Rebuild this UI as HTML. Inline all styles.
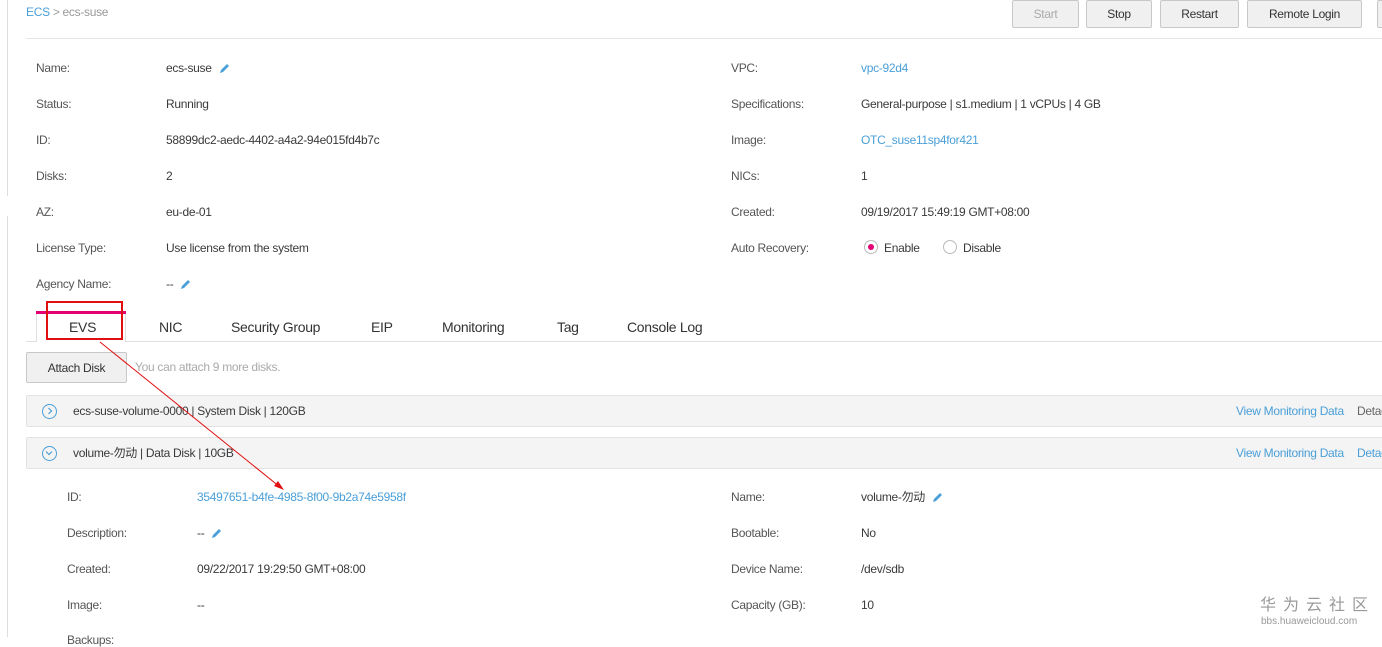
<!DOCTYPE html>
<html><head><meta charset="utf-8"><style>
*{margin:0;padding:0;box-sizing:border-box}
body{width:1382px;height:637px;overflow:hidden;background:#fff;font-family:"Liberation Sans","Noto Sans CJK SC",sans-serif;font-size:12px;color:#3a3a3a;position:relative;letter-spacing:-0.3px;line-height:14px}
.a{position:absolute;white-space:nowrap}
.l{color:#555}
.lk{color:#4a9fd8}
.btn{position:absolute;top:0;height:28px;border:1px solid #c8c8c8;border-radius:2px;background:#f0f0f0;text-align:center;line-height:26px;color:#333}
.pen{display:inline-block;width:12px;height:12px;vertical-align:middle;margin-left:6px}
.panel{position:absolute;left:26px;width:1370px;height:32px;background:#f4f4f4;border:1px solid #e2e2e2;border-radius:2px}
.ci{position:absolute;left:15px;top:8px;width:15px;height:15px;border:1.3px solid #4a9fd8;border-radius:50%}
.tab{position:absolute;top:319px;font-size:14px;color:#333;line-height:16px}
</style></head><body>
<div class="a" style="left:7px;top:0;width:1px;height:196px;background:#ddd"></div>
<div class="a" style="left:7px;top:216px;width:1px;height:421px;background:#ddd"></div>
<div class="a" style="left:26px;top:5px;color:#999"><span class="lk">ECS</span> &gt; ecs-suse</div>
<div class="a" style="left:26px;top:38px;width:1356px;height:1px;background:#e6e6e6"></div>
<div class="btn" style="left:1012px;width:67px;color:#aaa">Start</div>
<div class="btn" style="left:1086px;width:66px">Stop</div>
<div class="btn" style="left:1160px;width:79px">Restart</div>
<div class="btn" style="left:1247px;width:115px">Remote Login</div>
<div class="btn" style="left:1377px;width:20px"></div>

<div class="a l" style="left:36px;top:61px">Name:</div><div class="a" style="left:166px;top:61px">ecs-suse<svg class="pen" viewBox="0 0 12 12"><path d="M2 10 L3 7 L9 1 L11 3 L5 9 Z" fill="#4a9fd8"/></svg></div>
<div class="a l" style="left:36px;top:97px">Status:</div><div class="a" style="left:166px;top:97px">Running</div>
<div class="a l" style="left:36px;top:133px">ID:</div><div class="a" style="left:166px;top:133px">58899dc2-aedc-4402-a4a2-94e015fd4b7c</div>
<div class="a l" style="left:36px;top:169px">Disks:</div><div class="a" style="left:166px;top:169px">2</div>
<div class="a l" style="left:36px;top:205px">AZ:</div><div class="a" style="left:166px;top:205px">eu-de-01</div>
<div class="a l" style="left:36px;top:241px">License Type:</div><div class="a" style="left:166px;top:241px">Use license from the system</div>
<div class="a l" style="left:36px;top:277px">Agency Name:</div><div class="a" style="left:166px;top:277px">--<svg class="pen" viewBox="0 0 12 12"><path d="M2 10 L3 7 L9 1 L11 3 L5 9 Z" fill="#4a9fd8"/></svg></div>

<div class="a l" style="left:731px;top:61px">VPC:</div><div class="a lk" style="left:861px;top:61px">vpc-92d4</div>
<div class="a l" style="left:731px;top:97px">Specifications:</div><div class="a" style="left:861px;top:97px">General-purpose | s1.medium | 1 vCPUs | 4 GB</div>
<div class="a l" style="left:731px;top:133px">Image:</div><div class="a lk" style="left:861px;top:133px">OTC_suse11sp4for421</div>
<div class="a l" style="left:731px;top:169px">NICs:</div><div class="a" style="left:861px;top:169px">1</div>
<div class="a l" style="left:731px;top:205px">Created:</div><div class="a" style="left:861px;top:205px">09/19/2017 15:49:19 GMT+08:00</div>
<div class="a l" style="left:731px;top:241px">Auto Recovery:</div>
<div class="a" style="left:864px;top:240px;width:14px;height:14px;border:1px solid #bbb;border-radius:50%"><div style="margin:3px;width:6px;height:6px;border-radius:50%;background:#e20074"></div></div>
<div class="a" style="left:884px;top:241px">Enable</div>
<div class="a" style="left:943px;top:240px;width:14px;height:14px;border:1px solid #bbb;border-radius:50%"></div>
<div class="a" style="left:963px;top:241px">Disable</div>

<div class="a" style="left:26px;top:341px;width:1356px;height:1px;background:#e0e0e0"></div>
<div class="a" style="left:36px;top:312px;width:90px;height:30px;background:#fff;border-left:1px solid #e0e0e0;border-right:1px solid #e0e0e0"></div>
<div class="a" style="left:36px;top:311px;width:90px;height:3px;background:#e20074"></div>
<div class="tab" style="left:69px">EVS</div>
<div class="tab" style="left:159px">NIC</div>
<div class="tab" style="left:231px">Security Group</div>
<div class="tab" style="left:371px">EIP</div>
<div class="tab" style="left:442px">Monitoring</div>
<div class="tab" style="left:557px">Tag</div>
<div class="tab" style="left:627px">Console Log</div>
<div class="a" style="left:46px;top:301px;width:77px;height:39px;border:2px solid #e01010"></div>

<div class="btn" style="left:26px;top:352px;width:101px;height:31px;line-height:30px">Attach Disk</div>
<div class="a" style="left:135px;top:360px;color:#aaa">You can attach 9 more disks.</div>

<div class="panel" style="top:395px"><div class="ci"></div><div class="a" style="left:46px;top:8px">ecs-suse-volume-0000 | System Disk | 120GB</div><div class="a lk" style="left:1209px;top:8px">View Monitoring Data</div><div class="a" style="left:1330px;top:8px;color:#666">Detach</div></div>
<svg class="a" style="left:45px;top:406px" width="10" height="10" viewBox="0 0 10 10"><path d="M3.5 2 L6.5 5 L3.5 8" stroke="#4a9fd8" fill="none" stroke-width="1.2"/></svg>
<div class="panel" style="top:437px"><div class="ci"></div><div class="a" style="left:46px;top:8px">volume-勿动 | Data Disk | 10GB</div><div class="a lk" style="left:1209px;top:8px">View Monitoring Data</div><div class="a lk" style="left:1330px;top:8px">Detach</div></div>
<svg class="a" style="left:44px;top:448px" width="10" height="10" viewBox="0 0 10 10"><path d="M2 3.5 L5 6.5 L8 3.5" stroke="#4a9fd8" fill="none" stroke-width="1.2"/></svg>

<div class="a l" style="left:67px;top:490px">ID:</div><div class="a lk" style="left:197px;top:490px">35497651-b4fe-4985-8f00-9b2a74e5958f</div>
<div class="a l" style="left:67px;top:526px">Description:</div><div class="a" style="left:197px;top:526px">--<svg class="pen" viewBox="0 0 12 12"><path d="M2 10 L3 7 L9 1 L11 3 L5 9 Z" fill="#4a9fd8"/></svg></div>
<div class="a l" style="left:67px;top:562px">Created:</div><div class="a" style="left:197px;top:562px">09/22/2017 19:29:50 GMT+08:00</div>
<div class="a l" style="left:67px;top:598px">Image:</div><div class="a" style="left:197px;top:598px">--</div>
<div class="a l" style="left:67px;top:633px">Backups:</div>
<div class="a l" style="left:731px;top:490px">Name:</div><div class="a" style="left:861px;top:490px">volume-勿动<svg class="pen" viewBox="0 0 12 12"><path d="M2 10 L3 7 L9 1 L11 3 L5 9 Z" fill="#4a9fd8"/></svg></div>
<div class="a l" style="left:731px;top:526px">Bootable:</div><div class="a" style="left:861px;top:526px">No</div>
<div class="a l" style="left:731px;top:562px">Device Name:</div><div class="a" style="left:861px;top:562px">/dev/sdb</div>
<div class="a l" style="left:731px;top:598px">Capacity (GB):</div><div class="a" style="left:861px;top:598px">10</div>

<svg class="a" style="left:0;top:0" width="1382" height="637"><line x1="100" y1="342" x2="280" y2="487" stroke="#e01010" stroke-width="1"/><path d="M284 490 L274 486 L278 481 Z" fill="#e01010"/></svg>

<div class="a" style="left:1260px;top:597px;font-size:16px;line-height:18px;color:#999;letter-spacing:7px">华为云社区</div>
<div class="a" style="left:1261px;top:616px;font-size:10px;line-height:12px;color:#999;letter-spacing:0">bbs.huaweicloud.com</div>
</body></html>
